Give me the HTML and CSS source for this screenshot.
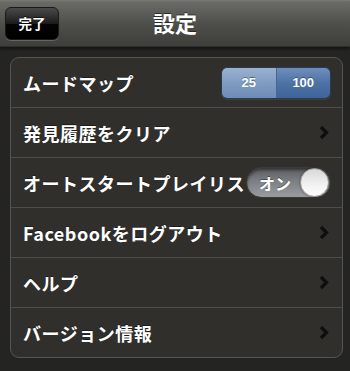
FILE: index.html
```html
<!DOCTYPE html>
<html lang="ja">
<head>
<meta charset="utf-8">
<link rel="stylesheet" href="styles.css">
</head>
<body>
<div class="screen">
  <header class="navbar">
    <button class="done">完了</button>
    <h1 class="title">設定</h1>
  </header>
  <main class="content">
    <ul class="group">
      <li class="row">
        <span class="label">ムードマップ</span>
        <div class="segmented">
          <span class="seg seg-left">25</span>
          <span class="seg seg-right">100</span>
        </div>
      </li>
      <li class="row">
        <span class="label">発見履歴をクリア</span>
        <svg class="chev" width="10" height="15" viewBox="0 0 10 15"><path d="M2 2 L7.5 7.5 L2 13" fill="none" stroke="#0e0e0d" stroke-width="3.2"/></svg>
      </li>
      <li class="row">
        <span class="label">オートスタートプレイリス</span>
        <div class="toggle">
          <span class="toggle-text">オン</span>
          <span class="knob"></span>
        </div>
      </li>
      <li class="row">
        <span class="label">Facebookをログアウト</span>
        <svg class="chev" width="10" height="15" viewBox="0 0 10 15"><path d="M2 2 L7.5 7.5 L2 13" fill="none" stroke="#0e0e0d" stroke-width="3.2"/></svg>
      </li>
      <li class="row">
        <span class="label">ヘルプ</span>
        <svg class="chev" width="10" height="15" viewBox="0 0 10 15"><path d="M2 2 L7.5 7.5 L2 13" fill="none" stroke="#0e0e0d" stroke-width="3.2"/></svg>
      </li>
      <li class="row">
        <span class="label">バージョン情報</span>
        <svg class="chev" width="10" height="15" viewBox="0 0 10 15"><path d="M2 2 L7.5 7.5 L2 13" fill="none" stroke="#0e0e0d" stroke-width="3.2"/></svg>
      </li>
    </ul>
  </main>
</div>
</body>
</html>
```
FILE: styles.css
```css
* { box-sizing: border-box; }
html, body {
  margin: 0;
  padding: 0;
  background: #242422;
}
body {
  font-family: "Noto Sans CJK JP", "Liberation Sans", sans-serif;
  color: #fff;
}
.screen {
  width: 350px;
  height: 371px;
  overflow: hidden;
  background: #242422;
}
.navbar {
  height: 47px;
  background: linear-gradient(to bottom, #7a7a76 0px, #6a6a66 2px, #4e4e4b 24px, #3e3e3b 46px);
  border-bottom: 1px solid #2e2e2c;
  display: flex;
  align-items: center;
  position: relative;
  box-shadow: 0 2px 3px rgba(0,0,0,0.45);
}
.done {
  margin-left: 5px;
  width: 54px;
  height: 33px;
  border-radius: 6px;
  border: 1px solid #1a1a1a;
  background: linear-gradient(to bottom, #4a4a4a 0%, #1c1c1c 50%, #050505 51%, #000 100%);
  box-shadow: 0 1px 0 rgba(255,255,255,0.18);
  color: #fff;
  font-family: "Noto Sans CJK JP", sans-serif;
  font-weight: 700;
  font-size: 13.5px;
  padding: 0;
  text-shadow: 0 -1px 0 rgba(0,0,0,0.6);
}
.title {
  position: absolute;
  left: 0;
  right: 0;
  top: 0;
  margin: 0;
  text-align: center;
  line-height: 44px;
  font-size: 22px;
  font-weight: 700;
  text-shadow: 0 -1px 0 rgba(0,0,0,0.5);
  pointer-events: none;
}
.content {
  padding: 10px 7px 0 10px;
}
.group {
  list-style: none;
  margin: 0;
  padding: 0;
  background: #302f2c;
  border: 1px solid #555552;
  border-radius: 9px;
  overflow: hidden;
}
.row {
  height: 50px;
  display: flex;
  align-items: center;
  justify-content: space-between;
  padding: 0 12px 0 12px;
  border-top: 1px solid #4d4d4a;
}
.row:first-child {
  border-top: none;
  height: 49px;
}
.label {
  font-size: 18px;
  font-weight: 700;
  letter-spacing: 0.5px;
  white-space: nowrap;
  text-shadow: 0 -1px 0 rgba(0,0,0,0.4);
}
.segmented {
  display: flex;
  width: 110px;
  height: 32px;
  margin-right: -1px;
  border-radius: 6px;
  overflow: hidden;
  border: 1px solid #2a3a52;
  box-shadow: 0 1px 0 rgba(255,255,255,0.08);
}
.seg {
  flex: 1;
  display: flex;
  align-items: center;
  justify-content: center;
  font-family: "Liberation Sans", sans-serif;
  font-weight: 700;
  font-size: 13px;
  color: #fff;
  text-shadow: 0 -1px 0 rgba(0,0,0,0.35);
}
.seg-left {
  background: linear-gradient(to bottom, #9bb2d0 0%, #7f9cc2 50%, #6d8cb6 100%);
  border-right: 1px solid #4a6690;
}
.seg-right {
  background: linear-gradient(to bottom, #6e8fbd 0%, #4e72a6 50%, #3f6499 100%);
}
.chev {
  display: block;
  margin-right: 1px;
}
.toggle {
  width: 85px;
  height: 31px;
  margin-right: -1px;
  border-radius: 16px;
  background: linear-gradient(to bottom, #5a5c60 0%, #7b7e83 45%, #9a9ca0 100%);
  border: 1px solid #3b3b3b;
  display: flex;
  align-items: center;
  justify-content: space-between;
  padding: 0 1px 0 12px;
  box-shadow: inset 0 2px 3px rgba(0,0,0,0.45);
}
.toggle-text {
  font-size: 16px;
  font-weight: 700;
  color: #fff;
  text-shadow: 0 -1px 0 rgba(0,0,0,0.4);
}
.knob {
  width: 29px;
  height: 29px;
  border-radius: 50%;
  background: linear-gradient(to bottom, #d8d8d8 0%, #f2f2f2 60%, #ffffff 100%);
  border: 1px solid #9a9a9a;
  box-shadow: 0 0 2px rgba(0,0,0,0.5);
}
```
